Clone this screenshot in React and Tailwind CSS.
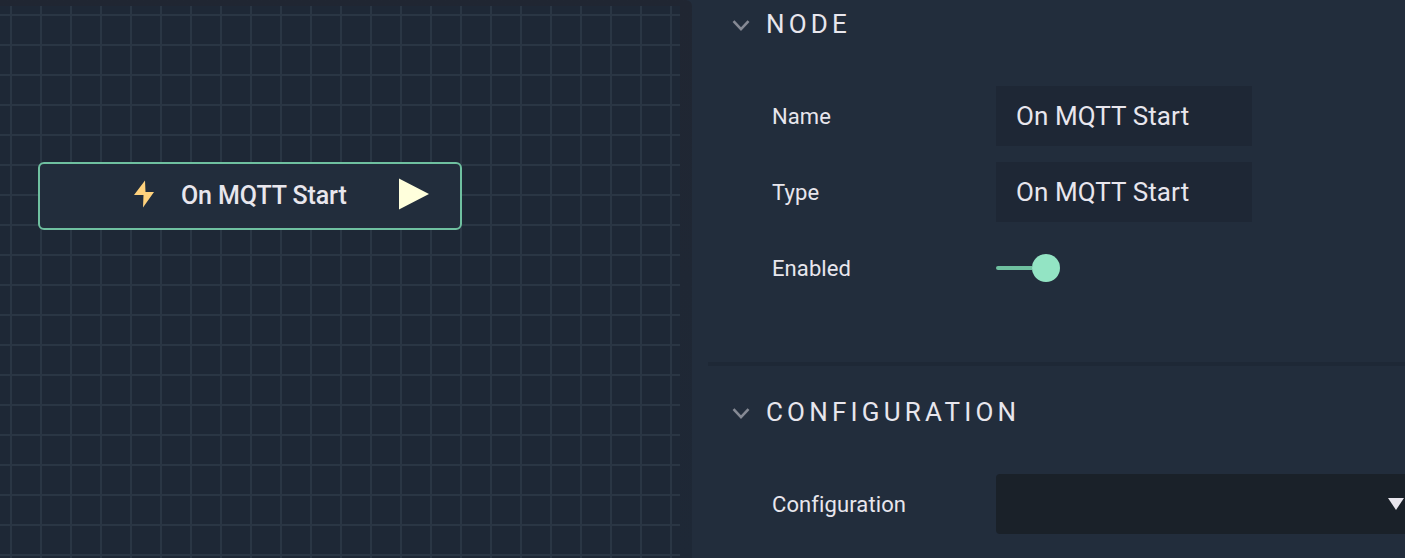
function Chevron() {
  return (
    <svg width="18" height="12" viewBox="0 0 18 12" className="mt-[3px] shrink-0" fill="none">
      <path d="M1.5 1.2 L9 9.2 L16.5 1.2" stroke="#858994" strokeWidth="2.6" />
    </svg>
  );
}

function SectionTitle({ children }) {
  return (
    <div className="flex h-8 items-center gap-4 pl-10">
      <Chevron />
      <h2 className="text-[26px] leading-8 tracking-[4.2px] whitespace-nowrap">{children}</h2>
    </div>
  );
}

function Row({ label, children }) {
  return (
    <div className="flex h-[60px] items-center pl-20">
      <div className="w-56 shrink-0 pt-0.5 text-[22px] leading-8 tracking-[0.1px]">{label}</div>
      {children}
    </div>
  );
}

function Field({ value }) {
  return (
    <div className="flex h-[60px] w-64 items-center bg-[#1e2735] pl-5 text-[26px] tracking-[0.1px] whitespace-nowrap">
      {value}
    </div>
  );
}

function FlowNode() {
  return (
    <div className="flex h-[68px] w-[424px] items-center rounded-md border-2 border-[#6fc0a0] bg-[#222d3c] pb-1">
      <svg width="20" height="28" viewBox="0 0 20 28" className="ml-[94px] shrink-0">
        <path d="M11 0.5 L0 15 H9.5 L9 27.5 L20 12 H11.5 Z" fill="#ffd27d" />
      </svg>
      <div className="mt-1 ml-[27px] w-[218px] text-[25px] font-medium tracking-[-0.1px] whitespace-nowrap">On MQTT Start</div>
      <svg width="30" height="32" viewBox="0 0 30 32" className="shrink-0">
        <path d="M0 0.5 L30 16 L0 31.5 Z" fill="#ffffdc" />
      </svg>
    </div>
  );
}

export default function App() {
  return (
    <div className="flex h-[558px] w-[1405px] overflow-hidden bg-[#222d3c] font-[Roboto,sans-serif] text-[#e8e6ed]">
      <div className="w-[692px] shrink-0 rounded-tr-md bg-linear-to-b from-[#202632] to-[#1e2836] pt-1.5">
        <div className="h-[552px] w-[680px] bg-[#1e2836] bg-[linear-gradient(to_right,#2a3644_2px,transparent_2px),linear-gradient(to_bottom,#2a3644_2px,transparent_2px)] bg-size-[30px_30px] bg-position-[10px_8px] pt-[156px] pl-[38px]">
          <FlowNode />
        </div>
      </div>
      <div className="w-[713px] shrink-0 pt-2">
        <SectionTitle>NODE</SectionTitle>
        <div className="flex flex-col gap-4 pt-[46px]">
          <Row label="Name"><Field value="On MQTT Start" /></Row>
          <Row label="Type"><Field value="On MQTT Start" /></Row>
          <Row label="Enabled">
            <div className="flex items-center">
              <div className="h-1 w-9 rounded-l-full bg-[#6fc0a0]" />
              <div className="size-7 rounded-full bg-[#93e4c4]" />
            </div>
          </Row>
        </div>
        <div className="mt-16 ml-4 h-1 bg-[#1e2836]" />
        <div className="pt-[30px]">
          <SectionTitle>CONFIGURATION</SectionTitle>
        </div>
        <div className="pt-[46px]">
          <Row label="Configuration">
            <div className="flex h-[60px] w-[409px] items-center justify-end rounded-l bg-[#1a2129] pr-px">
              <svg width="16" height="12" viewBox="0 0 16 12">
                <path d="M0 0 H16 L8 12 Z" fill="#e8e6ed" />
              </svg>
            </div>
          </Row>
        </div>
      </div>
    </div>
  );
}
